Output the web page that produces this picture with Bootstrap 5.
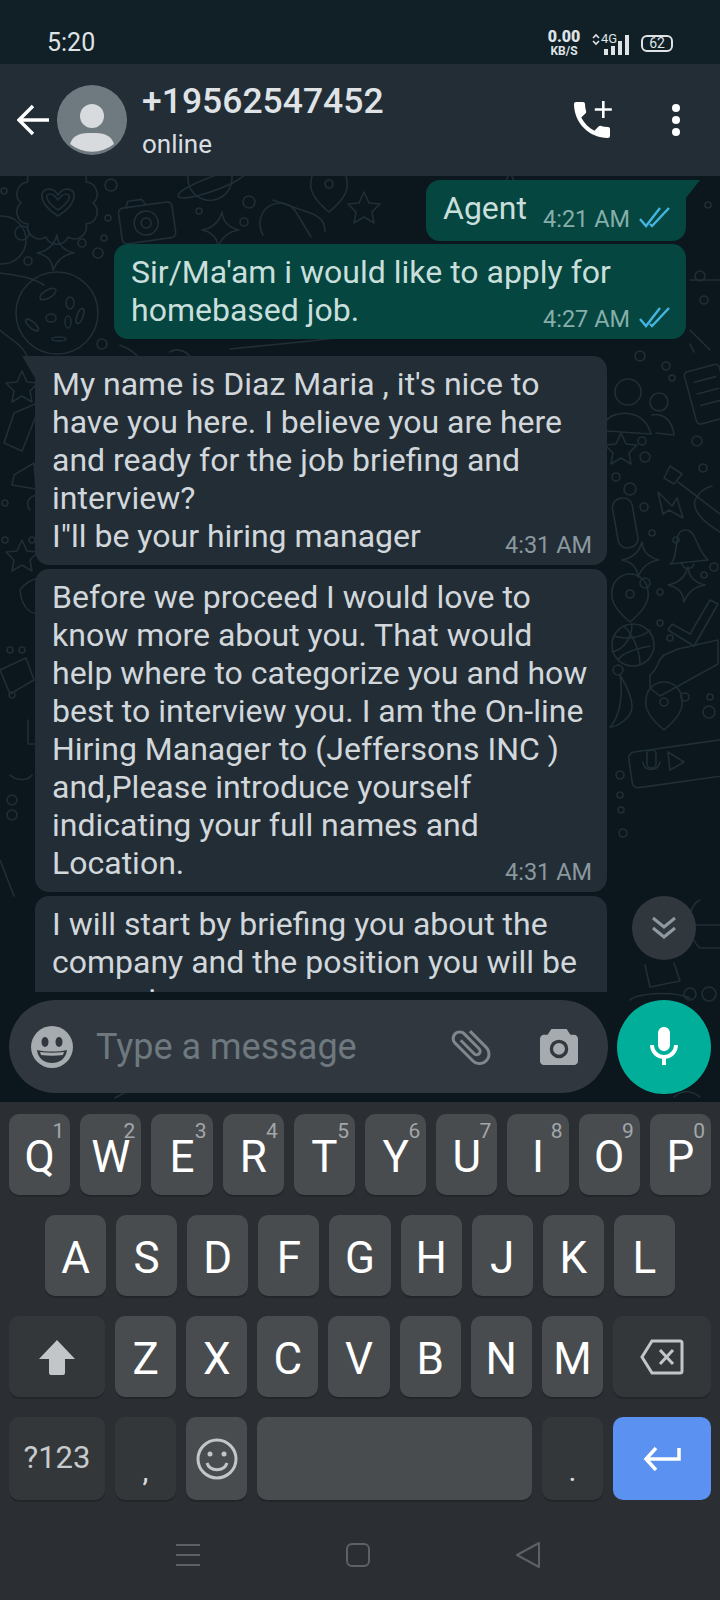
<!DOCTYPE html>
<html lang="en">
<head>
    <meta charset="UTF-8">
    <meta name="viewport" content="width=device-width, initial-scale=1.0">
    <title>Chat</title>
    <link href="https://cdn.jsdelivr.net/npm/bootstrap@5.3.3/dist/css/bootstrap.min.css" rel="stylesheet">
    <style>
        body { margin: 0; background: #2b2f33; font-family: Roboto, "Liberation Sans", sans-serif; }
        .phone { width: 720px; height: 1600px; overflow: hidden; }

        .status-bar { height: 64px; background: #111f27; color: #dfe3e5; padding: 22px 47px 0 47px; }
        .status-time { font-size: 25px; }
        .net-speed { font-weight: 700; line-height: 1; width: 34px; margin-right: 10px; }
        .net-speed b { font-size: 16px; }
        .net-speed span { font-size: 12px; }
        .batt { width: 32px; height: 17px; border: 2px solid #dfe3e5; border-radius: 6px; font-size: 14px; line-height: 13px; margin-left: 6px; margin-right: 0; position: relative; }

        .app-head { height: 112px; background: #232d36; padding-left: 17px; color: #fff; }
        .head-title { margin-left: 15px; }
        .head-name { font-size: 35.5px; font-weight: 500; color: #dfe3e6; line-height: 40px; }
        .head-sub { font-size: 26px; line-height: 30px; color: #d9dee1; margin-top: 8px; }

        .chat-pane { height: 926px; background: #0b161d; overflow: hidden; }
        .doodles { position: absolute; left: 0; top: 0; fill: none; stroke: #202e36; stroke-width: 1.6; stroke-linejoin: round; stroke-linecap: round; }
        .msg-list { height: 816px; overflow: hidden; padding-top: 4px; position: relative; }
        .bubble { position: relative; font-size: 32px; line-height: 38px; padding: 9px 17px 10px 17px; border-radius: 14px; width: 572px; }
        .bubble.inc { background: #232d36; color: #d1d7db; margin-left: 35px; }
        .bubble.out { background: #054640; color: #c9dfdb; margin-right: 34px; }
        .bubble.short { width: 260px; padding-bottom: 14px; }
        .bubble.first-inc { border-top-left-radius: 0; }
        .bubble.first-out { border-top-right-radius: 0; }
        .bubble.first-inc::before { content: ""; position: absolute; left: -13px; top: 0; border-top: 22px solid #232d36; border-left: 13px solid transparent; }
        .bubble.first-out::after { content: ""; position: absolute; right: -14px; top: 0; border-top: 18px solid #054640; border-right: 14px solid transparent; }
        .stamp { position: absolute; right: 15px; bottom: 5px; font-size: 23.5px; line-height: 30px; color: #8a989f; }
        .out .stamp { color: #86aeaa; }
        .short .stamp { bottom: 7px; }
        .stamp svg { margin-left: 9px; vertical-align: -2px; }
        .gap-s { margin-top: 4px; }
        .gap-l { margin-top: 17px; }
        .jump-btn { position: absolute; left: 632px; top: 720px; width: 64px; height: 64px; border-radius: 50%; background: #30383e; }

        .composer { height: 93px; margin: 8px 9px 9px 9px; position: relative; }
        .msg-box { width: 599px; background: #30373e; border-radius: 47px; padding-left: 21px; }
        .msg-hint { font-size: 36px; color: #6e787f; margin-left: 22px; }
        .mic-btn { width: 94px; height: 94px; border-radius: 50%; background: #00ae99; margin-left: 9px; }

        .kb { height: 498px; background: #2b2f33; padding: 12px 9px 0 9px; }
        .kb-row { height: 81px; gap: 10px; margin-bottom: 20px; }
        .kb-row.inset { padding: 0 36px; }
        .kb-key { flex: 1 1 0; position: relative; background: #484c4f; border-radius: 10px; box-shadow: 0 2px 0 #232629; color: #fff; font-size: 44px; padding-top: 5px; }
        .kb-key.dark { background: #33373a; }
        .kb-key.wide { flex: 0 0 96px; }
        .kb-key.wider { flex: 0 0 98px; }
        .kb-key.enter { background: #5b91f1; box-shadow: none; }
        .kb-key.sym { flex: 0 0 61px; }
        .kb-key.plain-key { padding-top: 0; }
        .kb-key sup { position: absolute; top: 7px; right: 6px; font-size: 21px; line-height: 1; color: #a3a7aa; }
        .kb-num { font-size: 31px; color: #c8cbcd; padding-top: 0; }
        .last-row { height: 83px; }
        .kb-punct { font-size: 30px; color: #d9dcde; padding-top: 24px; }
        .nav-strip { height: 60px; margin-top: 25px; padding: 0 170px 0 166px; }
    </style>
</head>
<body>
<div class="phone d-flex flex-column">

    <div class="status-bar d-flex align-items-center justify-content-between">
        <div class="status-time">5:20</div>
        <div class="d-flex align-items-center">
            <div class="net-speed d-flex flex-column align-items-center"><b>0.00</b><span>KB/S</span></div>
            <svg width="44" height="24" viewBox="0 0 44 24">
                <path d="M2 7l3-3 3 3M2 10l3 3 3-3" fill="none" stroke="#dfe3e5" stroke-width="1.6"/>
                <text x="10" y="12" font-size="13" fill="#dfe3e5" font-family="Roboto">4G</text>
                <g fill="#dfe3e5"><rect x="13" y="18" width="4" height="6"/><rect x="20" y="15" width="4" height="9"/><rect x="27" y="10" width="4" height="14"/><rect x="34" y="4" width="4" height="20"/></g>
            </svg>
            <div class="batt text-center">62</div>
        </div>
    </div>

    <div class="app-head d-flex align-items-center">
        <svg width="32" height="32" viewBox="0 0 32 32" fill="none" stroke="#fff" stroke-width="3.4" class="flex-shrink-0">
            <path d="M32 16H2M16 2L2 16l14 14"/>
        </svg>
        <svg width="70" height="70" viewBox="0 0 70 70" class="flex-shrink-0 ms-2">
            <circle cx="35" cy="35" r="35" fill="#6f7a80"/>
            <circle cx="35" cy="31" r="12" fill="#d8dbdd"/>
            <path d="M13 59c3-10 12-11 22-11s19 1 22 11a35 35 0 0 1-44 0z" fill="#d8dbdd"/>
        </svg>
        <div class="head-title flex-grow-1">
            <div class="head-name">+19562547452</div>
            <div class="head-sub">online</div>
        </div>
        <svg width="48" height="48" viewBox="0 0 24 24" fill="#fff" class="flex-shrink-0">
            <path d="M6.62 10.79c1.44 2.83 3.76 5.14 6.59 6.59l2.2-2.2c.27-.27.67-.36 1.02-.24 1.12.37 2.33.57 3.57.57.55 0 1 .45 1 1V20c0 .55-.45 1-1 1-9.39 0-17-7.61-17-17 0-.55.45-1 1-1h3.5c.55 0 1 .45 1 1 0 1.25.2 2.45.57 3.57.11.35.03.74-.25 1.02l-2.2 2.2z"/>
            <path d="M17 2.500h1.300v3.600h3.600v1.300h-3.600V11H17V7.400h-3.600V6.100H17z"/>
        </svg>
        <svg width="12" height="36" viewBox="0 0 12 36" fill="#fff" class="flex-shrink-0" style="margin:0 38px 0 54px">
            <circle cx="6" cy="6" r="4"/><circle cx="6" cy="18" r="4"/><circle cx="6" cy="30" r="4"/>
        </svg>
    </div>

    <div class="chat-pane position-relative">
        <svg class="doodles" width="720" height="926" viewBox="0 176 720 926">
            <defs>
                <path id="st4" d="M2-18Q3-4 19 0 4 2-2 17-3 3-18 0-2-3 2-18Z"/>
                <path id="st5" d="M0-16 5-5 16-4 8 4 10 15 0 9-10 15-8 4-16-4-5-5Z"/>
                <g id="drop"><path d="M0 22C-12 12-20 2-18-8A18 18 0 0 1 18-8C20 2 12 12 0 22Z"/><circle cy="-6" r="4"/></g>
            </defs>
            <path d="M93 203A12 12 0 0 1 86 224 12 12 0 0 1 68 237 12 12 0 0 1 46 237 12 12 0 0 1 28 224 12 12 0 0 1 21 203 12 12 0 0 1 28 182 12 12 0 0 1 46 169 12 12 0 0 1 68 169 12 12 0 0 1 86 182 12 12 0 0 1 93 203Z"/>
            <path d="M58 216C40 205 37 190 49 189 54 189 56 192 58 195 60 192 63 189 67 189 79 190 76 205 58 216Z"/>
            <path d="M58 210C46 202 44 194 50 194 54 194 56 197 58 200 60 197 62 194 66 194 72 194 70 202 58 210Z"/>
            <g transform="rotate(-8 146 222)"><rect x="120" y="205" width="54" height="36" rx="5"/><path d="M128 205l3-6h14l3 6"/><circle cx="146" cy="223" r="12"/><circle cx="146" cy="223" r="5"/></g>
            <g transform="rotate(-20 212 184)"><circle cx="212" cy="178" r="22"/><ellipse cx="212" cy="184" rx="36" ry="7"/></g>
            <use href="#st4" x="55" y="253"/><use href="#st4" x="220" y="230"/><use href="#st4" x="640" y="560"/><use href="#st4" x="686" y="585"/><use href="#st4" x="620" y="205"/>
            <use href="#st5" x="364" y="208"/><use href="#st5" x="621" y="449"/><use href="#st5" x="22" y="387"/><use href="#st5" x="22" y="556"/><use href="#st5" x="510" y="188"/>
            <use href="#drop" x="329" y="190"/><use href="#drop" x="630" y="600"/><use href="#drop" x="664" y="708"/>
            <g transform="translate(-9 -5)"><path d="M272 240c-8-14 0-32 18-32 8 0 14 6 18 14l12 20"/><path d="M282 205l40 14M322 219c8 4 12 8 12 18"/></g>
            <circle cx="57" cy="313" r="41"/><ellipse cx="48" cy="294" rx="9" ry="4" transform="rotate(-30 48 294)"/><ellipse cx="70" cy="303" rx="4" ry="6"/><ellipse cx="51" cy="318" rx="5" ry="4"/><ellipse cx="68" cy="322" rx="3" ry="6"/><ellipse cx="80" cy="316" rx="3" ry="8" transform="rotate(20 80 316)"/><ellipse cx="32" cy="325" rx="8" ry="3" transform="rotate(40 32 325)"/><ellipse cx="59" cy="339" rx="7" ry="2"/>
            <path d="M0 273C12 275 30 276 44 285M0 330C10 340 25 345 28 360"/><circle cx="2" cy="240" r="24"/>
            <path d="M230 349l80-8 42-5M120 345c10 4 18 10 20 16M170 352c6-4 14-2 20 4"/>
            <g transform="rotate(-15 705 395)"><rect x="690" y="368" width="36" height="54" rx="4"/><path d="M698 380h22M698 392h22M698 404h22"/></g>
            <circle cx="628" cy="392" r="13"/><circle cx="659" cy="402" r="9"/><path d="M607 420c5-8 36-14 44 14l-44-3M652 415c8-2 20 2 22 20l-18-2"/>
            <path d="M670 466l12 8-8 10-10-6zM678 482l42 32M712 486c-8 2-14 8-17 14-2 8 2 18 25 32"/>
            <path d="M658 492l14 14 5-8 6 20-14-8-6 4z"/>
            <rect x="615" y="498" width="20" height="50" rx="9" transform="rotate(-10 625 522)"/>
            <path d="M670 564c6-2 6-22 8-28 2-8 12-8 16 0 4 8 6 16 14 24zM682 564c2 6 10 6 12 0"/><circle cx="676" cy="540" r="3"/>
            <path d="M672 624l18 10 20-34 8 4-24 42-26-16z"/>
            <circle cx="633" cy="645" r="21"/><path d="M614 636c12 4 28 2 36-6M612 652c10-2 20-12 20-28M624 626c10 10 16 26 16 38M618 660c4-6 12-10 32-14"/>
            <path d="M650 675c10-8 6-14 14-20l14-6 40-9v24l-58 32-10-8z"/>
            <path d="M620 675c6 10 12 22 12 32 0 10-14 20-22 20 8-8 14-28 10-52z"/>
            <rect x="630" y="745" width="110" height="36" rx="6" transform="rotate(-8 685 763)"/><rect x="647" y="750" width="9" height="18" rx="4"/><path d="M643 762c0 10 16 10 17 0M668 752l16 10-14 8z"/>
            <path d="M645 965l5 22 30-6-6-18M700 900c-14 6-14 36 0 48h20M690 925h30"/>
            <circle cx="690" cy="994" r="6"/><circle cx="709" cy="994" r="7"/><path d="M630 1000c6-6 40-10 60-2"/>
            <path d="M14 413l28-12-20 50-18-8zM14 475l20-12 2 26-24-4zM30 510c-10-14 14-22 22-6"/><path d="M20 590c10-14 30-16 36-4l-14 24c-8 8-20 0-22-20zM0 670l26-12 8 22-24 14z"/><path d="M28 720v24h12M10 775c6 6 18 6 22 0"/><path d="M0 860l14 36"/>
            <path d="M115 1098l18-10M700 1097c-10-8-20-6-26 0"/>
            <path d="M694 352l-4-8M690 330l20 20M690 280h30"/><circle cx="700" cy="276" r="5"/><circle cx="704" cy="300" r="4"/><circle cx="708" cy="205" r="3"/>
            <circle cx="4" cy="191" r="3"/><circle cx="111" cy="185" r="6"/><circle cx="22" cy="233" r="7"/><circle cx="82" cy="243" r="4"/><circle cx="28" cy="261" r="4"/><circle cx="98" cy="253" r="5"/><circle cx="108" cy="218" r="3"/><circle cx="104" cy="238" r="3"/><circle cx="199" cy="211" r="3"/><circle cx="249" cy="202" r="6"/><circle cx="244" cy="222" r="4"/><circle cx="102" cy="344" r="5"/><circle cx="640" cy="356" r="5"/><circle cx="666" cy="366" r="4"/><circle cx="672" cy="378" r="3"/><circle cx="642" cy="441" r="4"/><circle cx="645" cy="457" r="5"/><circle cx="697" cy="441" r="5"/><circle cx="703" cy="468" r="4"/><circle cx="616" cy="477" r="4"/><circle cx="630" cy="489" r="6"/><circle cx="644" cy="507" r="4"/><circle cx="652" cy="533" r="3"/><circle cx="714" cy="567" r="4"/><circle cx="704" cy="575" r="3"/><circle cx="645" cy="583" r="5"/><circle cx="660" cy="592" r="3"/><circle cx="660" cy="623" r="3"/><circle cx="670" cy="638" r="3"/><circle cx="618" cy="670" r="5"/><circle cx="685" cy="697" r="4"/><circle cx="710" cy="697" r="3"/><circle cx="709" cy="712" r="6"/><circle cx="620" cy="775" r="4"/><circle cx="5" cy="503" r="3"/><circle cx="5" cy="540" r="3"/><circle cx="32" cy="540" r="3"/><circle cx="10" cy="650" r="3"/><circle cx="22" cy="650" r="3"/><circle cx="12" cy="695" r="3"/><circle cx="12" cy="800" r="5"/><circle cx="12" cy="815" r="5"/><circle cx="620" cy="795" r="3"/><circle cx="621" cy="810" r="3"/><circle cx="623" cy="833" r="4"/>
        </svg>

        <div class="msg-list d-flex flex-column">
            <div class="bubble out short first-out align-self-end">Agent
                <div class="stamp">4:21 AM<svg width="32" height="24" viewBox="0 0 32 22" fill="none" stroke="#44b4e0" stroke-width="2.4"><path d="M1 13l6 7L21 2M11 18l2 2L30 2"/></svg></div>
            </div>
            <div class="bubble out align-self-end" style="margin-top:3px">Sir/Ma'am i would like to apply for<br>homebased job.
                <div class="stamp">4:27 AM<svg width="32" height="24" viewBox="0 0 32 22" fill="none" stroke="#44b4e0" stroke-width="2.4"><path d="M1 13l6 7L21 2M11 18l2 2L30 2"/></svg></div>
            </div>
            <div class="bubble inc first-inc gap-l">My name is Diaz Maria , it's nice to<br>have you here. I believe you are here<br>and ready for the job briefing and<br>interview?<br>I"ll be your hiring manager
                <div class="stamp">4:31 AM</div>
            </div>
            <div class="bubble inc gap-s">Before we proceed I would love to<br>know more about you. That would<br>help where to categorize you and how<br>best to interview you. I am the On-line<br>Hiring Manager to (Jeffersons INC )<br>and,Please introduce yourself<br>indicating your full names and<br>Location.
                <div class="stamp">4:31 AM</div>
            </div>
            <div class="bubble inc gap-s">I will start by briefing you about the<br>company and the position you will be<br>assuming.</div>
        </div>

        <div class="jump-btn d-flex align-items-center justify-content-center">
            <svg width="26" height="24" viewBox="0 0 26 24" fill="none" stroke="#8f999f" stroke-width="3"><path d="M2 2l11 9 11-9M2 12l11 9 11-9"/></svg>
        </div>

        <div class="composer d-flex">
            <div class="msg-box d-flex align-items-center">
                <svg width="44" height="44" viewBox="0 0 44 44" class="flex-shrink-0">
                    <circle cx="22" cy="22" r="21" fill="#a6abaf"/>
                    <ellipse cx="15" cy="17" rx="3.500" ry="5" fill="#30373e"/><ellipse cx="29" cy="17" rx="3.500" ry="5" fill="#30373e"/>
                    <path d="M7 25c9 2 21 2 30 0-1 9-8 13-15 13S8 34 7 25z" fill="#30373e"/><path d="M10 27c8 1 16 1 24 0l-1 3c-7 1-15 1-22 0z" fill="#a6abaf"/>
                </svg>
                <div class="msg-hint flex-grow-1">Type a message</div>
                <svg width="48" height="48" viewBox="0 0 24 24" fill="#7f878c" class="flex-shrink-0">
                    <path transform="rotate(-45 12 12)" d="M16.500 6v11.500c0 2.210-1.790 4-4 4s-4-1.790-4-4V5c0-1.380 1.120-2.500 2.500-2.500s2.500 1.120 2.500 2.500v10.500c0 .550-.450 1-1 1s-1-.450-1-1V6H10v9.500c0 1.380 1.120 2.500 2.500 2.500s2.500-1.120 2.500-2.500V5c0-2.210-1.790-4-4-4S7 2.790 7 5v12.500c0 3.040 2.460 5.500 5.500 5.500s5.500-2.460 5.500-5.500V6h-1.500z"/>
                </svg>
                <svg width="38" height="38" viewBox="0 0 40 38" class="flex-shrink-0" style="margin:0 30px 0 45px">
                    <path d="M12 0h16l4 6h4c2 0 4 2 4 4v24c0 2-2 4-4 4H4c-2 0-4-2-4-4V10c0-2 2-4 4-4h4z" fill="#a6abaf"/>
                    <circle cx="20" cy="21" r="8" fill="none" stroke="#30373e" stroke-width="3.500"/>
                </svg>
            </div>
            <div class="mic-btn d-flex align-items-center justify-content-center">
                <svg width="48" height="48" viewBox="0 0 24 24" fill="#fff">
                    <path d="M12 14c1.660 0 3-1.340 3-3V5c0-1.660-1.340-3-3-3S9 3.340 9 5v6c0 1.660 1.340 3 3 3z"/>
                    <path d="M17 11c0 2.760-2.240 5-5 5s-5-2.240-5-5H5c0 3.530 2.610 6.430 6 6.920V21h2v-3.080c3.390-.490 6-3.390 6-6.920h-2z"/>
                </svg>
            </div>
        </div>
    </div>

    <div class="kb">
        <div class="kb-row d-flex">
            <div class="kb-key d-flex align-items-center justify-content-center">Q<sup>1</sup></div>
            <div class="kb-key d-flex align-items-center justify-content-center">W<sup>2</sup></div>
            <div class="kb-key d-flex align-items-center justify-content-center">E<sup>3</sup></div>
            <div class="kb-key d-flex align-items-center justify-content-center">R<sup>4</sup></div>
            <div class="kb-key d-flex align-items-center justify-content-center">T<sup>5</sup></div>
            <div class="kb-key d-flex align-items-center justify-content-center">Y<sup>6</sup></div>
            <div class="kb-key d-flex align-items-center justify-content-center">U<sup>7</sup></div>
            <div class="kb-key d-flex align-items-center justify-content-center">I<sup>8</sup></div>
            <div class="kb-key d-flex align-items-center justify-content-center">O<sup>9</sup></div>
            <div class="kb-key d-flex align-items-center justify-content-center">P<sup>0</sup></div>
        </div>
        <div class="kb-row inset d-flex">
            <div class="kb-key d-flex align-items-center justify-content-center">A</div>
            <div class="kb-key d-flex align-items-center justify-content-center">S</div>
            <div class="kb-key d-flex align-items-center justify-content-center">D</div>
            <div class="kb-key d-flex align-items-center justify-content-center">F</div>
            <div class="kb-key d-flex align-items-center justify-content-center">G</div>
            <div class="kb-key d-flex align-items-center justify-content-center">H</div>
            <div class="kb-key d-flex align-items-center justify-content-center">J</div>
            <div class="kb-key d-flex align-items-center justify-content-center">K</div>
            <div class="kb-key d-flex align-items-center justify-content-center">L</div>
        </div>
        <div class="kb-row d-flex">
            <div class="kb-key plain-key dark wide d-flex align-items-center justify-content-center">
                <svg width="38" height="36" viewBox="0 0 38 36" fill="#c3c6c8"><path d="M19 1l18 19H27v14a2 2 0 0 1-2 2H13a2 2 0 0 1-2-2V20H1z"/></svg>
            </div>
            <div class="kb-key d-flex align-items-center justify-content-center">Z</div>
            <div class="kb-key d-flex align-items-center justify-content-center">X</div>
            <div class="kb-key d-flex align-items-center justify-content-center">C</div>
            <div class="kb-key d-flex align-items-center justify-content-center">V</div>
            <div class="kb-key d-flex align-items-center justify-content-center">B</div>
            <div class="kb-key d-flex align-items-center justify-content-center">N</div>
            <div class="kb-key d-flex align-items-center justify-content-center">M</div>
            <div class="kb-key plain-key dark wider d-flex align-items-center justify-content-center">
                <svg width="44" height="36" viewBox="0 0 44 36" fill="none" stroke="#c3c6c8" stroke-width="3"><path d="M12 2h28a2 2 0 0 1 2 2v28a2 2 0 0 1-2 2H12L2 18z"/><path d="M20 11l13 14M33 11L20 25"/></svg>
            </div>
        </div>
        <div class="kb-row last-row d-flex">
            <div class="kb-key dark wide kb-num d-flex align-items-center justify-content-center">?123</div>
            <div class="kb-key dark sym kb-punct d-flex align-items-center justify-content-center">,</div>
            <div class="kb-key plain-key sym d-flex align-items-center justify-content-center">
                <svg width="42" height="42" viewBox="0 0 42 42" fill="none" stroke="#c3c6c8" stroke-width="3"><circle cx="21" cy="21" r="19"/><path d="M11 25c3 9 17 9 20 0"/><circle cx="14" cy="16" r="2.500" fill="#c3c6c8" stroke="none"/><circle cx="28" cy="16" r="2.500" fill="#c3c6c8" stroke="none"/></svg>
            </div>
            <div class="kb-key"></div>
            <div class="kb-key dark sym kb-punct d-flex align-items-center justify-content-center">.</div>
            <div class="kb-key plain-key enter wider d-flex align-items-center justify-content-center">
                <svg width="38" height="24" viewBox="0 0 38 24" fill="none" stroke="#fff" stroke-width="3.500"><path d="M36 1v11H3M13 1L3 12l10 11"/></svg>
            </div>
        </div>
        <div class="nav-strip d-flex align-items-center justify-content-between">
            <svg width="26" height="24" viewBox="0 0 26 24" stroke="#5c6165" stroke-width="2"><path d="M1 2h24M1 12h24M1 22h24"/></svg>
            <svg width="24" height="24" viewBox="0 0 24 24" fill="none" stroke="#5c6165" stroke-width="2"><rect x="1" y="1" width="22" height="22" rx="5"/></svg>
            <svg width="26" height="26" viewBox="0 0 26 26" fill="none" stroke="#5c6165" stroke-width="2" stroke-linejoin="round"><path d="M24 1v24L2 13z"/></svg>
        </div>
    </div>
</div>
<script src="https://cdn.jsdelivr.net/npm/bootstrap@5.3.3/dist/js/bootstrap.bundle.min.js"></script>
</body>
</html>
